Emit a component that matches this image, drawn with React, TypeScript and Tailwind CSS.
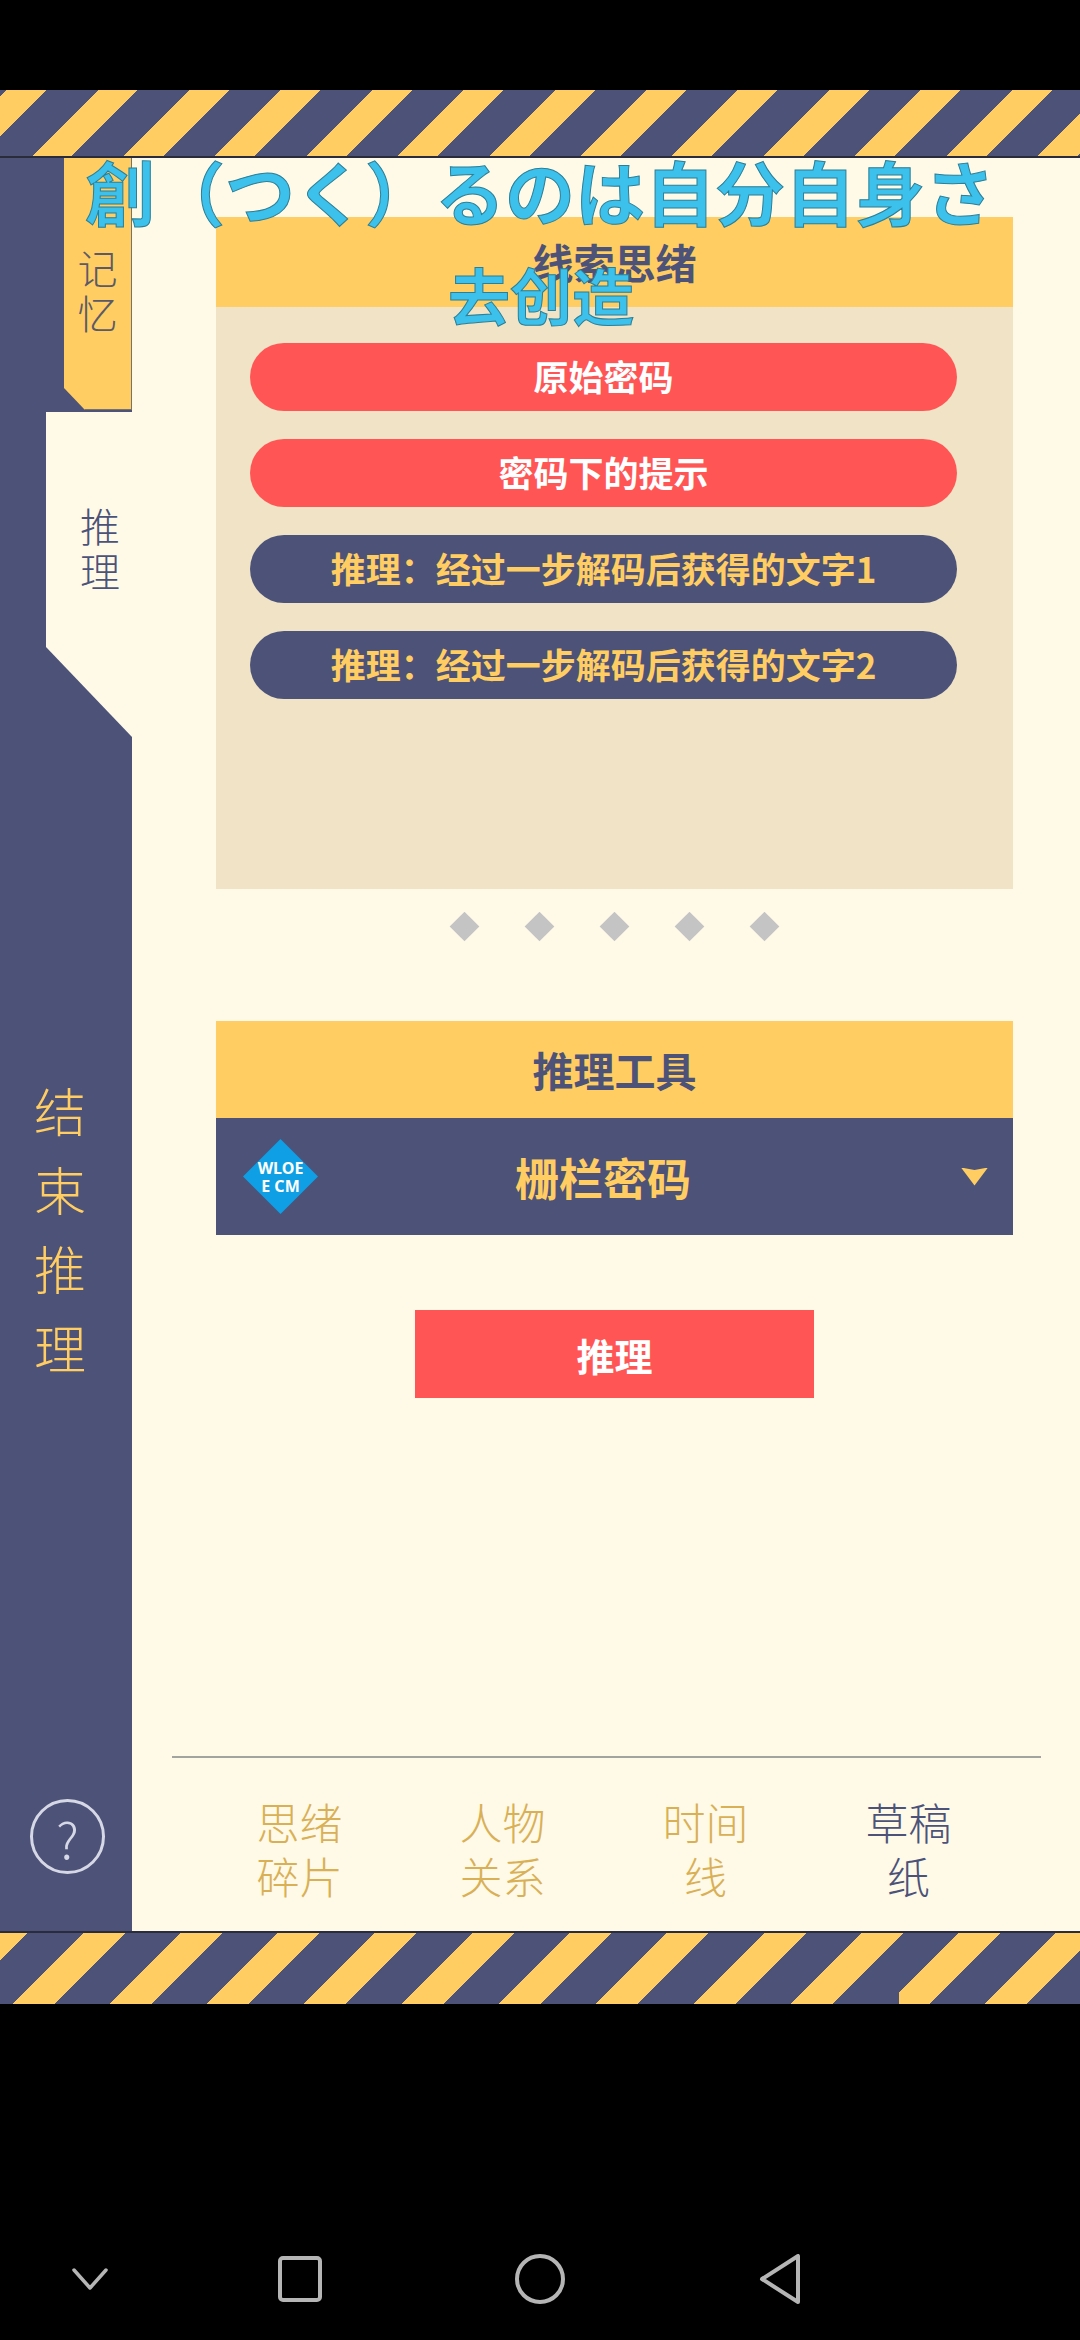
const navItems = [
  { id: 'fragments', lines: ['思绪', '碎片'], active: false },
  { id: 'relations', lines: ['人物', '关系'], active: false },
  { id: 'timeline', lines: ['时间', '线'], active: false },
  { id: 'draft', lines: ['草稿', '纸'], active: true }
]

const clues = [
  { id: 'raw', label: '原始密码', className: 'bg-[#ff5555] text-white' },
  { id: 'hint', label: '密码下的提示', className: 'bg-[#ff5555] text-white' },
  { id: 'step1', label: '推理：经过一步解码后获得的文字1', className: 'bg-[#4c5278] text-[#ffcd61]' },
  { id: 'step2', label: '推理：经过一步解码后获得的文字2', className: 'bg-[#4c5278] text-[#ffcd61]' }
]

function SystemBar() {
  return (
    <div className="flex items-center pl-[72px] pt-[250px] text-[#b5b5b5]">
      <svg width="36" height="22" viewBox="0 0 36 22" fill="none" stroke="currentColor" strokeWidth="3.5" strokeLinecap="round" strokeLinejoin="round">
        <path d="M2 2 L18 20 L34 2" />
      </svg>
      <svg className="ml-[170px]" width="44" height="46" viewBox="0 0 44 46" fill="none" stroke="currentColor" strokeWidth="4">
        <rect x="2" y="2" width="40" height="42" rx="3" />
      </svg>
      <svg className="ml-[193px]" width="50" height="50" viewBox="0 0 50 50" fill="none" stroke="currentColor" strokeWidth="4">
        <circle cx="25" cy="25" r="23" />
      </svg>
      <svg className="ml-[194px]" width="42" height="50" viewBox="0 0 42 50" fill="none" stroke="currentColor" strokeWidth="4" strokeLinejoin="round">
        <path d="M39 2 L39 48 L3 25 Z" />
      </svg>
    </div>
  )
}

function Sidebar() {
  return (
    <aside className="w-[132px] shrink-0 bg-[#4c5278] flex flex-col">
      <div className="ml-[64px] w-[68px] h-[252px] shrink-0 pt-[87px] bg-[#ffcd61] border-r border-b border-[#77736a] text-center text-[40px] leading-[45px] text-[#5b5a68] font-light [clip-path:polygon(0_0,100%_0,100%_100%,21px_100%,0_230px)]">
        记<br />忆
      </div>
      <div className="mt-[2px] ml-[46px] w-[86px] h-[325px] shrink-0 pt-[91px] pl-[22px] bg-[#fffaE8] text-center text-[40px] leading-[45px] text-[#4c5278] font-light [clip-path:polygon(0_0,100%_0,100%_100%,0_235px)]">
        推<br />理
      </div>
      <div className="mt-[333px] w-[120px] text-center text-[52px] leading-[79px] text-[#ffcd61] font-light">
        <div>结</div>
        <div>束</div>
        <div>推</div>
        <div>理</div>
      </div>
      <div className="mt-[413px] ml-[30px] w-[75px] h-[75px] rounded-full border-[3px] border-[#d7d8e6] flex items-center justify-center text-[50px] leading-none text-[#d7d8e6] font-light">
        ?
      </div>
    </aside>
  )
}

function MainPanel() {
  return (
    <main className="flex-1 bg-[#fffaE8] flex flex-col">
      <div className="pl-[84px] pt-[59px] w-[881px]">
        <div className="h-[90px] bg-[#ffcd61] flex items-center justify-center text-[41px] font-bold text-[#4c5278]">
          线索思绪
        </div>
        <div className="h-[582px] bg-[#f0e3c6] pt-[36px] pl-[34px] flex flex-col gap-[28px]">
          {clues.map((clue) => (
            <div
              key={clue.id}
              className={`w-[707px] h-[68px] rounded-full flex items-center justify-center text-[35px] leading-[64px] pb-[2px] font-bold ${clue.className}`}
            >
              {clue.label}
            </div>
          ))}
        </div>
        <div className="mt-[27px] flex justify-center gap-[54px]">
          {[1, 2, 3, 4, 5].map((dot) => (
            <span key={dot} className="w-[21px] h-[21px] bg-[#c4c4c4] rotate-45" />
          ))}
        </div>
        <div className="mt-[84px] h-[97px] bg-[#ffcd61] flex items-center justify-center text-[41px] font-bold text-[#4c5278]">
          推理工具
        </div>
        <div className="relative h-[117px] bg-[#4c5278] flex items-center pl-[27px] pr-[25px]">
          <div className="w-[75px] h-[75px] bg-[#0f9fe4] flex flex-col items-center justify-center text-white text-[16px] leading-[18px] font-bold [font-family:'Noto_Sans',sans-serif] [clip-path:polygon(50%_0,100%_50%,50%_100%,0_50%)]">
            <span>WLOE</span>
            <span>E CM</span>
          </div>
          <span className="ml-[197px] text-[44px] font-bold text-[#ffcd61]">栅栏密码</span>
          <span className="ml-auto w-[27px] h-[18px] bg-[#ffcd61] [clip-path:polygon(0_0,50%_14%,100%_0,50%_100%)]" />
        </div>
        <div className="mt-[75px] mx-auto w-[399px] h-[88px] bg-[#ff5555] flex items-center justify-center text-[38px] font-bold text-white">
          推理
        </div>
      </div>
      <div className="mt-auto ml-[40px] w-[869px] h-[2px] bg-[#a3a39f]" />
      <nav className="mt-[36px] mb-[29px] ml-[66px] flex">
        {navItems.map((item) => (
          <div
            key={item.id}
            className={`w-[203px] text-center text-[43px] leading-[54px] font-light ${item.active ? 'text-[#4c5278]' : 'text-[#d9b056]'}`}
          >
            {item.lines.map((line) => (
              <div key={line}>{line}</div>
            ))}
          </div>
        ))}
      </nav>
    </main>
  )
}

export default function App() {
  return (
    <div className="relative w-[1080px] h-[2340px] overflow-hidden bg-black flex flex-col pt-[90px] [font-family:'Noto_Sans_CJK_SC','Noto_Sans',sans-serif]">
      <div className="h-[68px] shrink-0 border-b-2 border-[#2a2c3c] bg-[repeating-linear-gradient(135deg,#4c5278_0,#4c5278_4.67px,#ffcd61_4.67px,#ffcd61_32.95px,#4c5278_32.95px,#4c5278_64.63px)]" />
      <div className="flex-1 flex min-h-0">
        <Sidebar />
        <MainPanel />
      </div>
      <div className="relative h-[73px] shrink-0 border-t-2 border-[#2a2c3c] bg-[repeating-linear-gradient(135deg,#ffcd61_0,#ffcd61_19.6px,#4c5278_19.6px,#4c5278_58.7px,#ffcd61_58.7px,#ffcd61_68.8px)]">
        <div className="absolute left-[884px] bottom-0 w-[15px] h-[16px] bg-[#4c5278]" />
      </div>
      <div className="h-[336px] shrink-0">
        <SystemBar />
      </div>

      <div className="absolute left-[85px] top-[149px] whitespace-nowrap text-[70px] leading-[84px] font-bold text-[#3cc0ec] [-webkit-text-stroke:1px_#2c7f96]">
        創（つく）るのは自分自身さ
      </div>
      <div className="absolute left-[448px] top-[256px] whitespace-nowrap text-[62px] leading-[76px] font-bold text-[#3cc0ec] [-webkit-text-stroke:1px_#2c7f96]">
        去创造
      </div>
    </div>
  )
}
